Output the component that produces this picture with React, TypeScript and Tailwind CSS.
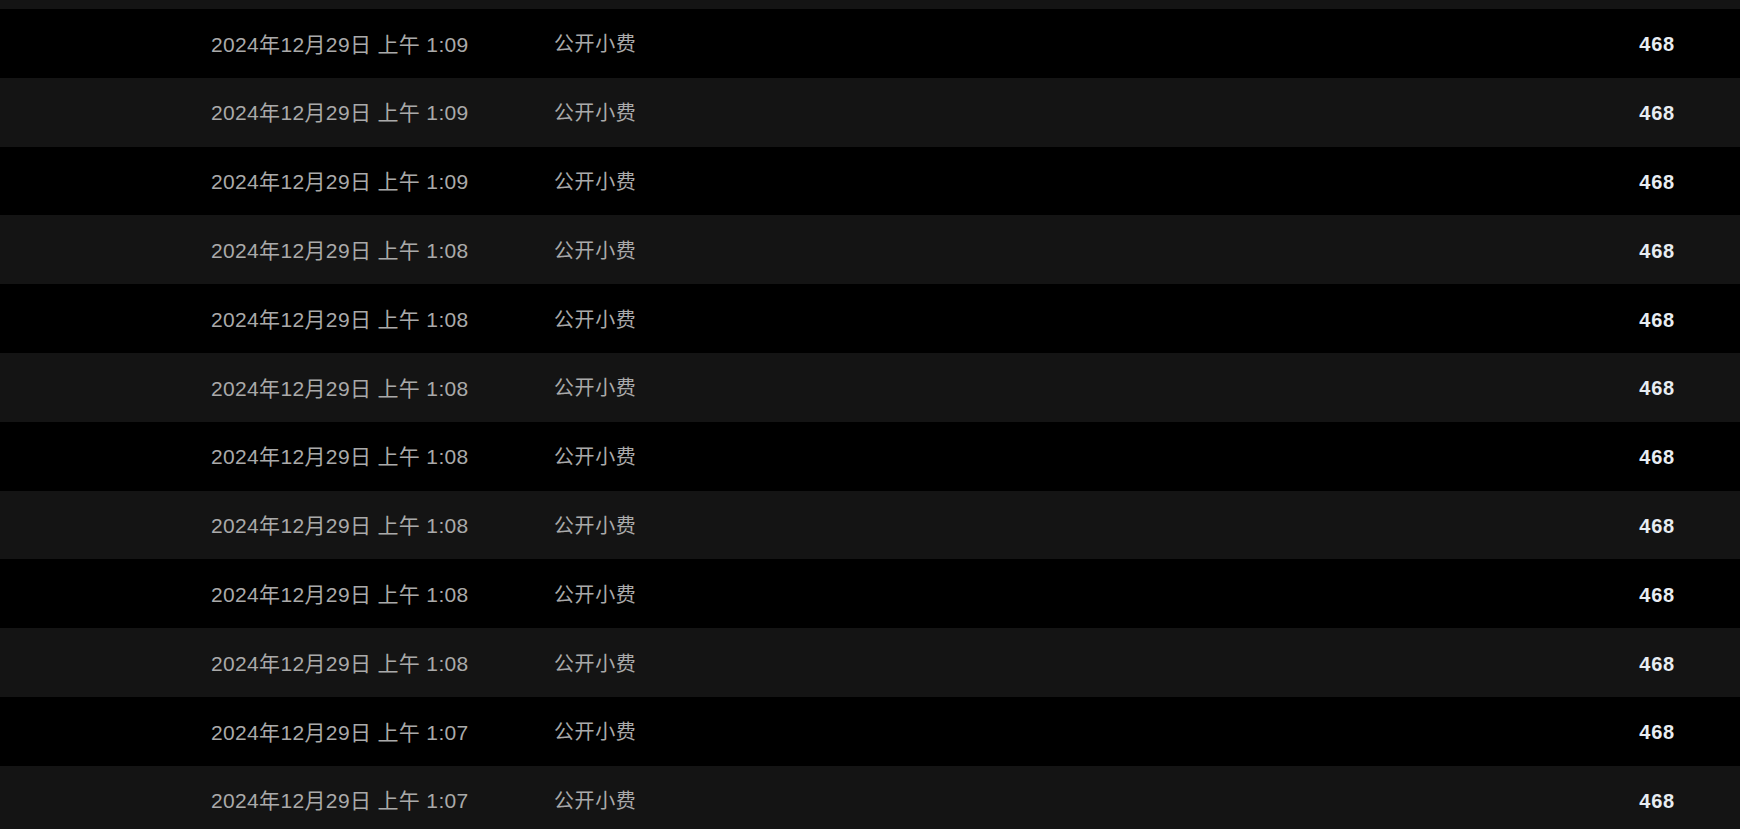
import React from "react";

const times = ["1:09", "1:09", "1:09", "1:08", "1:08", "1:08", "1:08", "1:08", "1:08", "1:08", "1:07", "1:07"];

export default function App() {
  return (
    <div
      className="w-[1740px] h-[829px] overflow-hidden bg-black"
      style={{ fontFamily: '"Liberation Sans", Arial, "Noto Sans CJK SC", sans-serif' }}
    >
      <div className="h-[9px] bg-[#141414]" />
      {times.map((t, i) => (
        <div
          key={i}
          className={`flex items-center h-[68.8px] pt-[2px] pl-[211px] pr-[65px] ${i % 2 === 0 ? "bg-black" : "bg-[#141414]"}`}
        >
          <span className="w-[343px] shrink-0 text-[21px] tracking-[0.35px] text-[#aaaaaa] whitespace-nowrap">
            2024年12月29日 上午 {t}
          </span>
          <span className="text-[20px] tracking-[0.6px] text-[#aaaaaa] whitespace-nowrap">公开小费</span>
          <span className="ml-auto text-[20px] font-bold tracking-[0.8px] text-[#e8edf2]">468</span>
        </div>
      ))}
    </div>
  );
}
